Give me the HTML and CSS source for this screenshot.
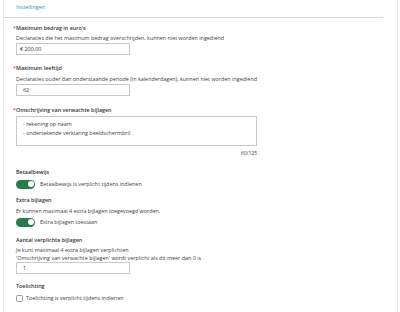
FILE: index.html
```html
<!DOCTYPE html>
<html lang="nl">
<head>
<meta charset="utf-8">
<link rel="stylesheet" href="styles.css">
</head>
<body>
<div class="frame">
  <div class="tabbar"><span class="tab">Instellingen</span></div>
  <div class="content">
    <div class="label l1"><span class="req">*</span>Maximum bedrag in euro's</div>
    <div class="desc d1">Declaraties die het maximum bedrag overschrijden, kunnen niet worden ingediend</div>
    <div class="input i1">€ 200.00</div>

    <div class="label l2"><span class="req">*</span>Maximum leeftijd</div>
    <div class="desc d2">Declaraties ouder dan onderstaande periode (in kalenderdagen), kunnen niet worden ingediend</div>
    <div class="input i2 pad">62</div>

    <div class="label l3"><span class="req">*</span>Omschrijving van verwachte bijlagen</div>
    <div class="textarea">
      <div>- rekening op naam</div>
      <div>- ondertekende verklaring beeldschermbril</div>
    </div>
    <div class="counter">60/125</div>

    <div class="label l4">Betaalbewijs</div>
    <div class="toggle-row t1"><span class="toggle"></span><span>Betaalbewijs is verplicht tijdens indienen</span></div>

    <div class="label l5">Extra bijlagen</div>
    <div class="desc d3">Er kunnen maximaal 4 extra bijlagen toegevoegd worden.</div>
    <div class="toggle-row t2"><span class="toggle"></span><span>Extra bijlagen toestaan</span></div>

    <div class="label l6">Aantal verplichte bijlagen</div>
    <div class="desc d4">Je kunt maximaal 4 extra bijlagen verplichten</div>
    <div class="desc">'Omschrijving van verwachte bijlagen' wordt verplicht als dit meer dan 0 is</div>
    <div class="input i3 pad">1</div>

    <div class="label l7">Toelichting</div>
    <div class="check-row"><span class="checkbox"></span><span>Toelichting is verplicht tijdens indienen</span></div>
  </div>
</div>
</body>
</html>
```
FILE: styles.css
```css
html, body {
  margin: 0;
  padding: 0;
  background: #ffffff;
}
body {
  font-family: "Open Sans", "Liberation Sans", sans-serif;
  font-size: 5.4px;
  line-height: 8px;
  color: #404040;
}
.frame {
  margin-left: 3px;
  width: 395px;
  height: 312px;
  border-left: 1px solid #ececec;
  border-right: 1px solid #ececec;
  box-sizing: border-box;
}
.tabbar {
  padding: 3px 0 6px 12px;
  margin-right: 14px;
  border-bottom: 1px solid #d9d9d9;
  color: #3d8bcb;
}
.content {
  padding-left: 12px;
}
.label {
  font-weight: 600;
  color: #333333;
}
.req {
  color: #d0202a;
  margin-left: -3px;
  font-weight: 400;
}
.l1 { margin-top: 6px; }
.d1 { margin-top: 2px; }
.input {
  width: 114px;
  height: 12px;
  box-sizing: border-box;
  border: 1px solid #c8c8c8;
  padding-left: 3px;
  line-height: 10px;
  color: #333;
}
.input.pad { padding-left: 6px; }
.i1 { margin-top: 1px; }
.l2 { margin-top: 9px; }
.d2 { margin-top: 3px; }
.i2 { margin-top: 1px; }
.l3 { margin-top: 10px; }
.textarea {
  margin-top: 2px;
  width: 241px;
  height: 30px;
  box-sizing: border-box;
  border: 1px solid #c8c8c8;
  padding: 3px 0 0 6px;
  line-height: 9px;
}
.counter {
  width: 241px;
  text-align: right;
  margin-top: 3px;
  font-size: 5px;
}
.l4 { margin-top: 11px; }
.toggle-row {
  display: flex;
  align-items: center;
  gap: 5px;
  height: 8px;
}
.t1 { margin-top: 4px; }
.t2 { margin-top: 3px; }
.toggle {
  position: relative;
  width: 19px;
  height: 9px;
  border-radius: 5px;
  background: #2b7a4b;
  flex: none;
}
.toggle::after {
  content: "";
  position: absolute;
  right: 1.5px;
  top: 1.5px;
  width: 6px;
  height: 6px;
  border-radius: 50%;
  background: #ffffff;
}
.l5 { margin-top: 8px; }
.d3 { margin-top: 3px; }
.l6 { margin-top: 10px; }
.d4 { margin-top: 2px; }
.i3 { margin-top: 0; }
.l7 { margin-top: 8px; }
.check-row {
  margin-top: 4px;
  display: flex;
  align-items: center;
  gap: 3px;
  height: 8px;
}
.checkbox {
  width: 7px;
  height: 7px;
  box-sizing: border-box;
  border: 1px solid #9a9a9a;
  border-radius: 1.5px;
  flex: none;
}
```
